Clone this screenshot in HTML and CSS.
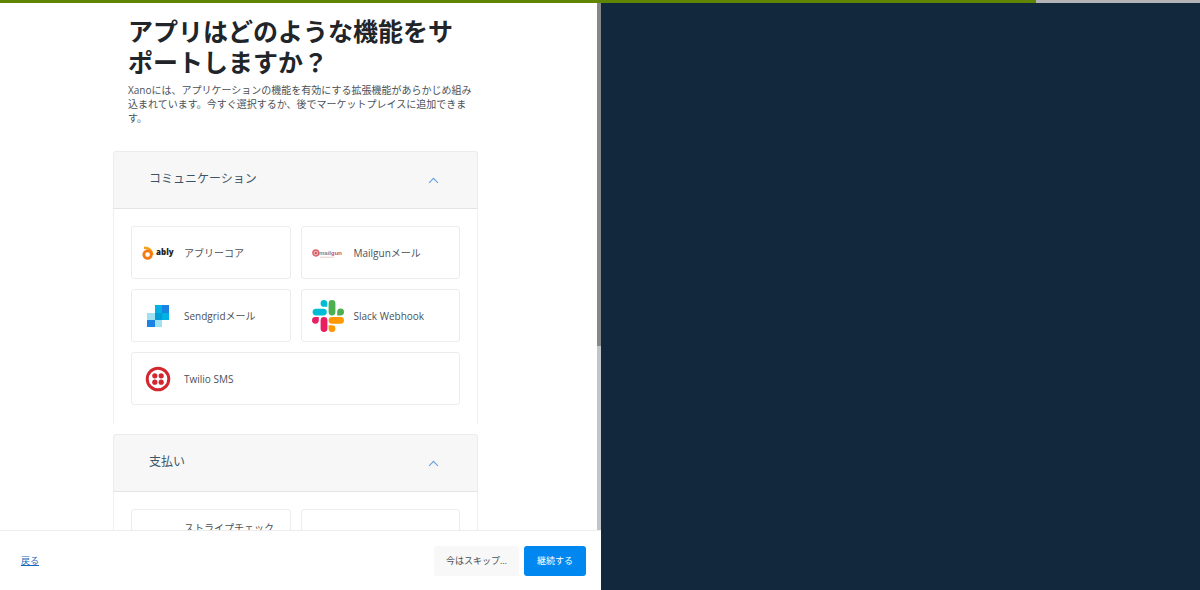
FILE: index.html
```
<!DOCTYPE html>
<html lang="ja">
<head>
<meta charset="utf-8">
<title>Xano</title>
<link rel="stylesheet" href="styles.css">
</head>
<body>
<div class="progress"><div class="progress-fill"></div></div>
<main class="layout">
  <section class="pane">
    <div class="viewport">
      <div class="content">
        <header class="intro">
          <h1 class="title">アプリはどのような機能をサ<br>ポートしますか？</h1>
          <p class="lead">Xanoには、アプリケーションの機能を有効にする拡張機能があらかじめ組み<br>込まれています。今すぐ選択するか、後でマーケットプレイスに追加できま<br>す。</p>
        </header>

        <section class="group">
          <button class="group-head" type="button" aria-expanded="true">
            <span>コミュニケーション</span>
            <svg class="chevron" viewBox="0 0 10 10"><path d="M1 7.2 5 3l4 4.2"/></svg>
          </button>
          <div class="group-body">
            <button class="tile" type="button">
              <svg class="logo" viewBox="0 0 32 32">
                <path d="M2 10.800C7 10.800 10.400 13.500 10.400 18" fill="none" stroke="#f9a01b" stroke-width="2.400"/>
                <circle cx="5.600" cy="17.600" r="3.800" fill="#fff" stroke="#f47a13" stroke-width="2.800"/>
                <text class="ably-word" x="14" y="18">ably</text>
              </svg>
              <span>アブリーコア</span>
            </button>
            <button class="tile" type="button">
              <svg class="logo" viewBox="0 0 32 32">
                <circle cx="3.800" cy="16" r="3" fill="#eeb0b5" stroke="#d9646d" stroke-width="1.300"/>
                <circle cx="3.800" cy="16" r="1.100" fill="#cf4450"/>
                <text class="mailgun-word" x="7" y="18"><tspan fill="#85858a">mail</tspan><tspan fill="#d2505b">gun</tspan></text>
                <path d="M8 20.200h14" stroke="#e6b6ba" stroke-width=".7"/>
              </svg>
              <span>Mailgunメール</span>
            </button>
            <button class="tile" type="button">
              <svg class="logo" viewBox="0 0 32 32" shape-rendering="crispEdges">
                <path fill="#9de1f3" d="M5 13h8v7H5zM13 20h7v7h-7z"/>
                <path fill="#00b2e3" d="M13 5h7v8h-7zM20 13h7v7h-7z"/>
                <path fill="#009dd9" d="M13 13h7v7h-7z"/>
                <path fill="#1a82e2" d="M20 5h7v8h-7zM5 20h8v7H5z"/>
              </svg>
              <span>Sendgridメール</span>
            </button>
            <button class="tile" type="button">
              <svg class="logo" viewBox="0 0 32 32">
                <path fill="#00bcd4" d="M12 0a3.3 3.3 0 1 0 0 6.8h3.3V3.4A3.4 3.4 0 0 0 12 0zM3.4 8.7a3.4 3.4 0 0 0 0 6.7H12a3.4 3.4 0 0 0 0-6.7z"/>
                <path fill="#4caf50" d="M20 0a3.4 3.4 0 0 0-3.4 3.4V12a3.4 3.4 0 0 0 6.8 0V3.4A3.4 3.4 0 0 0 20 0zM32 12a3.4 3.4 0 1 0-6.8 0v3.4h3.4A3.4 3.4 0 0 0 32 12z"/>
                <path fill="#ff9800" d="M20 16.9a3.4 3.4 0 0 0 0 6.8h8.6a3.4 3.4 0 0 0 0-6.8zM16.6 25.3v3.3a3.4 3.4 0 1 0 3.4-3.3z"/>
                <path fill="#e91e63" d="M0 20.3a3.4 3.4 0 1 0 6.8 0v-3.4H3.4A3.4 3.4 0 0 0 0 20.3zM12 16.9a3.4 3.4 0 0 0-3.4 3.4v8.3a3.4 3.4 0 0 0 6.8 0v-8.3a3.4 3.4 0 0 0-3.4-3.4z"/>
              </svg>
              <span>Slack Webhook</span>
            </button>
            <button class="tile tile-wide" type="button">
              <svg class="logo" viewBox="0 0 32 32">
                <circle cx="16" cy="16" r="10.8" fill="none" stroke="#d1272f" stroke-width="3"/>
                <g fill="#d1272f"><circle cx="12.8" cy="12.8" r="2.6"/><circle cx="19.2" cy="12.8" r="2.6"/><circle cx="12.8" cy="19.2" r="2.6"/><circle cx="19.2" cy="19.2" r="2.6"/></g>
              </svg>
              <span>Twilio SMS</span>
            </button>
          </div>
        </section>

        <section class="group">
          <button class="group-head" type="button" aria-expanded="true">
            <span>支払い</span>
            <svg class="chevron" viewBox="0 0 10 10"><path d="M1 7.2 5 3l4 4.2"/></svg>
          </button>
          <div class="group-body">
            <button class="tile" type="button">
              <svg class="logo" viewBox="0 0 32 32"><path d="M15 10h3v2h-3z" fill="#dce8f8"/></svg>
              <span>ストライプチェックアウト</span>
            </button>
            <button class="tile" type="button" aria-label="Stripe"></button>
          </div>
        </section>
      </div>
      <div class="scrollbar"><div class="scroll-thumb"></div></div>
    </div>
    <footer class="actions">
      <a class="back" href="#">戻る</a>
      <button class="btn btn-skip" type="button">今はスキップ...</button>
      <button class="btn btn-primary" type="button">継続する</button>
    </footer>
  </section>
  <aside class="preview"></aside>
</main>
</body>
</html>
```
FILE: styles.css
```
* { box-sizing: border-box; }

body {
  margin: 0;
  height: 100vh;
  display: flex;
  flex-direction: column;
  overflow: hidden;
  background: #fff;
  color: #4b5157;
  font-family: "Open Sans", "Noto Sans CJK JP", sans-serif;
  font-size: 10px;
}

button {
  font: inherit;
  color: inherit;
  cursor: pointer;
}

.progress {
  flex: none;
  height: 3px;
  background: #b3b4b6;
}

.progress-fill {
  width: 86.3%;
  height: 3px;
  background: #5f8503;
}

.layout {
  flex: 1;
  min-height: 0;
  display: grid;
  grid-template-columns: 601fr 599fr;
}

.pane {
  display: flex;
  flex-direction: column;
  min-width: 0;
  min-height: 0;
}

.viewport {
  flex: 1;
  min-height: 0;
  display: flex;
  overflow: hidden;
}

.content {
  flex: 1;
  min-width: 0;
  padding: 13px 119px 0 113px;
}

.intro {
  padding: 0 15px;
  margin-bottom: 26px;
  white-space: nowrap;
}

.title {
  margin: 0 0 5px;
  color: #212529;
  font-size: 25px;
  font-weight: 700;
  line-height: 31px;
}

.lead {
  margin: 0;
  line-height: 14px;
}

.group {
  margin-bottom: 10px;
}

.group-head {
  display: flex;
  justify-content: space-between;
  align-items: center;
  width: 100%;
  height: 58px;
  padding: 0 38px 4px 35px;
  border: 1px solid #ececec;
  border-bottom-color: #e2e4e5;
  border-radius: 3px 3px 0 0;
  background: #f7f7f7;
  color: #3c5468;
  font-size: 12px;
}

.chevron {
  width: 11px;
  height: 11px;
  margin-top: 4px;
  fill: none;
  stroke: #62a3e0;
  stroke-width: 1;
}

.group-body {
  display: grid;
  grid-template-columns: 1fr 1fr;
  gap: 10px;
  padding: 17px 17px 19px;
  border: 1px solid #f0f0f0;
  border-width: 0 1px;
}

.tile {
  display: flex;
  align-items: center;
  gap: 10px;
  min-height: 53px;
  padding: 9px 10px;
  border: 1px solid #ececec;
  border-radius: 3px;
  background: #fff;
  line-height: 16px;
  text-align: left;
}

.tile-wide {
  grid-column: span 2;
}

.logo {
  flex: none;
  width: 32px;
  height: 32px;
}

.ably-word {
  fill: #1f1f21;
  font: 800 8px "Open Sans", sans-serif;
}

.mailgun-word {
  font: 700 6px "Liberation Sans", sans-serif;
}

.scrollbar {
  flex: none;
  width: 4px;
  background: #c1c5c8;
}

.scroll-thumb {
  height: 65%;
  background: #868788;
}

.actions {
  flex: none;
  display: flex;
  align-items: center;
  gap: 5px;
  height: 60px;
  padding: 0 15px 0 21px;
  border-top: 1px solid #ececec;
  background: #fff;
  font-size: 9px;
}

.back {
  margin-right: auto;
  color: #1667b7;
}

.btn {
  height: 30px;
  padding: 0 13px;
  border: 0;
  border-radius: 3px;
}

.btn-skip {
  padding: 0 12px;
  background: #f8f8f8;
}

.btn-primary {
  background: #0088f0;
  color: #fff;
}

.preview {
  background: #12283c;
}
```
